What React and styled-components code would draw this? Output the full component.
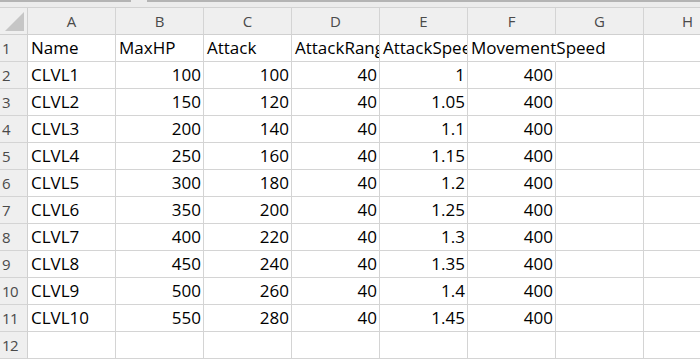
import React from "react"
import styled, { createGlobalStyle } from "styled-components";

const GlobalStyle = createGlobalStyle`
    html, body {
        margin: 0;
        padding: 0;
        background: #ffffff;
        overflow: hidden;
    }
`

const COLUMNS = ["A", "B", "C", "D", "E", "F", "G", "H"];
const HEADERS = ["Name", "MaxHP", "Attack", "AttackRange", "AttackSpeed", "MovementSpeed"];
const SPEEDS = ["1", "1.05", "1.1", "1.15", "1.2", "1.25", "1.3", "1.35", "1.4", "1.45"];

const rows = SPEEDS.map((speed, i) => [
    `CLVL${i + 1}`,
    String(100 + i * 50),
    String(100 + i * 20),
    "40",
    speed,
    "400",
]);

const App = () => {
    return (
        <Screen>
            <GlobalStyle />
            <TopStrip>
                <StripMark $width={131} />
                <StripGap />
                <StripMark $grow />
            </TopStrip>
            <Sheet>
                <Corner>
                    <CornerTriangle />
                </Corner>
                {COLUMNS.map((c) => (
                    <ColHeader key={c}>{c}</ColHeader>
                ))}

                <RowHeader>1</RowHeader>
                {COLUMNS.map((c, ci) => (
                    <Cell key={c} $spill={ci === 5}>
                        {HEADERS[ci] || ""}
                    </Cell>
                ))}

                {rows.map((row, ri) => (
                    <React.Fragment key={ri}>
                        <RowHeader>{ri + 2}</RowHeader>
                        {COLUMNS.map((c, ci) => (
                            <Cell key={c} $right={ci > 0 && ci < 6}>
                                {row[ci] || ""}
                            </Cell>
                        ))}
                    </React.Fragment>
                ))}

                <RowHeader>12</RowHeader>
                {COLUMNS.map((c) => (
                    <Cell key={c} />
                ))}
            </Sheet>
        </Screen>
    );
}

const Screen = styled.div`
    width: 700px;
    height: 360px;
    overflow: hidden;
    background: #ffffff;
`

const TopStrip = styled.div`
    /* remnant of the ribbon above the grid */
    display: flex;
    height: 7px;
    background: #ececec;
    border-bottom: 1px solid #d2d2d2;
`

const StripMark = styled.div`
    height: 2px;
    width: ${(p) => (p.$width ? `${p.$width}px` : "auto")};
    flex: ${(p) => (p.$grow ? 1 : "none")};
    background: #b4b4b4;
`

const StripGap = styled.div`
    width: 16px;
`

const Sheet = styled.div`
    display: grid;
    grid-template-columns: 28px repeat(8, 88px);
    grid-auto-rows: 27px;
    font-family: "Segoe UI", "Open Sans", "Noto Sans", sans-serif;
`

const Corner = styled.div`
    position: relative;
    background: #efefef;
    border-right: 1px solid #d0d0d0;
    border-bottom: 1px solid #d0d0d0;
`

const CornerTriangle = styled.div`
    position: absolute;
    left: 5px;
    top: 4px;
    width: 19px;
    height: 19px;
    background: #c6c6c6;
    clip-path: polygon(100% 0, 100% 100%, 0 100%);
`

const ColHeader = styled.div`
    display: flex;
    align-items: center;
    justify-content: center;
    background: #efefef;
    border-right: 1px solid #d4d4d4;
    border-bottom: 1px solid #d0d0d0;
    color: #4a4a4a;
    font-size: 15px;
    padding-bottom: 1px;
`

const RowHeader = styled.div`
    display: flex;
    align-items: center;
    padding-left: 2px;
    background: #efefef;
    border-right: 1px solid #d0d0d0;
    border-bottom: 1px solid #d4d4d4;
    color: #4a4a4a;
    font-size: 15px;
    letter-spacing: -0.5px;
`

const Cell = styled.div`
    position: relative;
    z-index: ${(p) => (p.$spill ? 1 : 0)};
    display: flex;
    align-items: flex-end;
    justify-content: ${(p) => (p.$right ? "flex-end" : "flex-start")};
    padding: 0 2px 3px 3px;
    border-right: ${(p) => (p.$spill ? "1px solid transparent" : "1px solid #d4d4d4")};
    border-bottom: 1px solid #d4d4d4;
    overflow: ${(p) => (p.$spill ? "visible" : "hidden")};
    white-space: nowrap;
    color: #000000;
    font-size: 17px;
    line-height: 20px;
`

export default App
